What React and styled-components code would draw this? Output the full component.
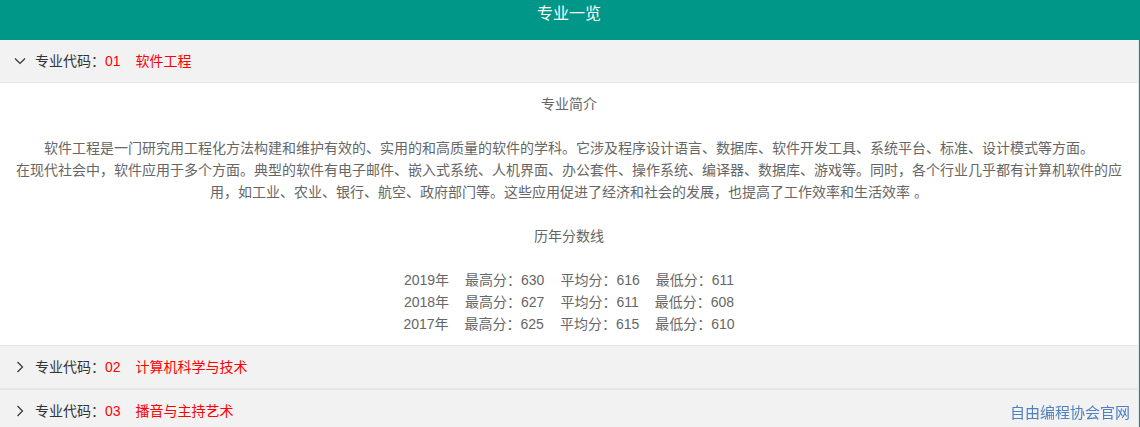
import React, { useState } from "react";
import styled, { createGlobalStyle } from "styled-components";

const GlobalStyle = createGlobalStyle`
  html, body {
    margin: 0;
    padding: 0;
    background: #009688;
    overflow: hidden;
  }
  body {
    font-family: "Liberation Sans", Arial, "Noto Sans CJK SC", sans-serif;
    font-size: 14px;
  }
`;

const majors = [
  { code: "01", name: "软件工程" },
  { code: "02", name: "计算机科学与技术" },
  { code: "03", name: "播音与主持艺术" },
];

const scores = [
  { year: "2019", high: 630, avg: 616, low: 611 },
  { year: "2018", high: 627, avg: 611, low: 608 },
  { year: "2017", high: 625, avg: 615, low: 610 },
];

const Chevron = ({ open }) => (
  <svg width="12" height="12" viewBox="0 0 12 12" fill="none">
    {open ? (
      <path d="M1 3.5 L6 8.5 L11 3.5" stroke="#333" strokeWidth="1.2" />
    ) : (
      <path d="M3.5 1 L8.5 6 L3.5 11" stroke="#333" strokeWidth="1.2" />
    )}
  </svg>
);

const App = () => {
  const [openIndex, setOpenIndex] = useState(0);

  return (
    <>
      <GlobalStyle />
      <Page>
        <Header>专业一览</Header>
        <Collapse>
          {majors.map((m, i) => (
            <Item key={m.code} first={i === 0}>
              <Title onClick={() => setOpenIndex(openIndex === i ? -1 : i)}>
                <Icon>
                  <Chevron open={openIndex === i} />
                </Icon>
                专业代码：<Red>{m.code}</Red>
                <Red gap>{m.name}</Red>
              </Title>
              {openIndex === i && (
                <Content>
                  <Line>专业简介</Line>
                  <Blank />
                  <Line>
                    软件工程是一门研究用工程化方法构建和维护有效的、实用的和高质量的软件的学科。它涉及程序设计语言、数据库、软件开发工具、系统平台、标准、设计模式等方面。
                    <br />
                    在现代社会中，软件应用于多个方面。典型的软件有电子邮件、嵌入式系统、人机界面、办公套件、操作系统、编译器、数据库、游戏等。同时，各个行业几乎都有计算机软件的应用，如工业、农业、银行、航空、政府部门等。这些应用促进了经济和社会的发展，也提高了工作效率和生活效率 。
                  </Line>
                  <Blank />
                  <Line>历年分数线</Line>
                  <Blank />
                  {scores.map((s) => (
                    <ScoreRow key={s.year}>
                      <span>{s.year}年</span>
                      <span>最高分：{s.high}</span>
                      <span>平均分：{s.avg}</span>
                      <span>最低分：{s.low}</span>
                    </ScoreRow>
                  ))}
                </Content>
              )}
            </Item>
          ))}
        </Collapse>
      </Page>
      <Watermark>自由编程协会官网</Watermark>
    </>
  );
};

const Page = styled.div`
  width: 1138px;
`;

const Header = styled.div`
  height: 40px;
  line-height: 28px;
  text-align: center;
  color: #fff;
  font-size: 16px;
  background: #009688;
`;

const Collapse = styled.div`
  background: #fff;
  border-right: 1px solid #e6e6e6;
  margin-right: -1px;
`;

const Item = styled.div`
  border-top: ${(p) => (p.first ? "none" : "1px solid #e6e6e6")};
`;

const Title = styled.div`
  position: relative;
  height: 42px;
  line-height: 42px;
  padding: 0 15px 0 35px;
  color: #333;
  background: #f2f2f2;
  cursor: pointer;
  border-bottom: 1px solid #e6e6e6;
`;

const Icon = styled.span`
  position: absolute;
  left: 14px;
  top: 0;
  height: 42px;
  display: flex;
  align-items: center;
`;

const Red = styled.span`
  color: #ff0000;
  margin-left: ${(p) => (p.gap ? "15px" : "0")};
`;

const Content = styled.div`
  padding: 10px 15px;
  line-height: 22px;
  color: #666;
  text-align: center;
  background: #fff;
`;

const Line = styled.div``;

const Blank = styled.div`
  height: 22px;
`;

const ScoreRow = styled.div`
  display: flex;
  justify-content: center;
  gap: 16px;
`;

const Watermark = styled.div`
  position: fixed;
  right: 10px;
  bottom: 5px;
  font-size: 15px;
  color: #4f80bf;
  font-family: "Noto Sans CJK SC", sans-serif;
  pointer-events: none;
`;

export default App;
